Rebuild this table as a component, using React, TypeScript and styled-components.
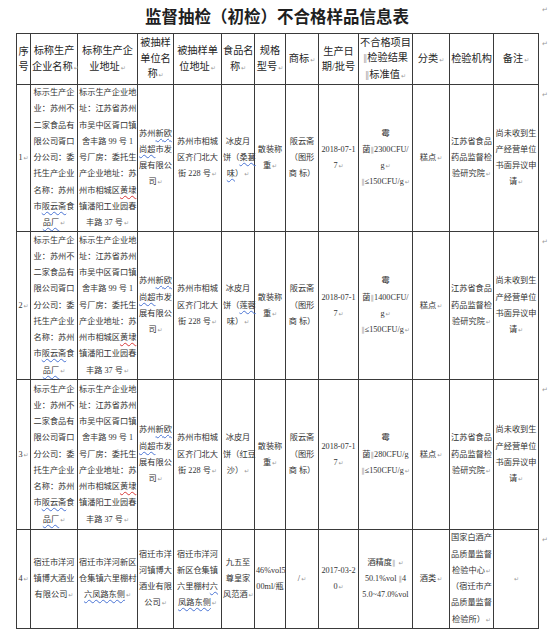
import React from "react";
import styled, { createGlobalStyle } from "styled-components";

const GlobalStyle = createGlobalStyle`
  html, body {
    margin: 0;
    padding: 0;
    background: #fff;
  }
  body {
    font-family: "Liberation Serif", "Noto Sans CJK SC", serif;
    color: #2e2e2e;
  }
`;

// column widths of the inspection table, px
const widths = [14, 47, 60, 36, 48, 33, 31, 33, 40, 54, 37, 44, 45];

// lines use a small markup: {x} blue spell squiggle, [x] red squiggle,
// ‖ grey separator, ↵ paragraph mark
const header: string[][] = [
  ["序", "号"],
  ["标称生产", "企业名称↵"],
  ["标称生产企", "业地址↵"],
  ["被抽样", "单位名", "称↵"],
  ["被抽样单", "位地址↵"],
  ["食品名", "称↵"],
  ["规格", "型号↵"],
  ["商标↵"],
  ["生产日", "期/批号"],
  ["不合格项目", "‖检验结果", "‖标准值↵"],
  ["分类↵"],
  ["检验机构"],
  ["备注↵"],
];

const maker = [
  "标示生产企",
  "业：苏州不",
  "二家食品有",
  "限公司胥口",
  "分公司：委",
  "托生产企业",
  "名称：苏州",
  "市{阪云斋}食",
  "{品厂}↵",
];
const makerAddr = [
  "标示生产企业地",
  "址：江苏省苏州",
  "市吴中区胥口镇",
  "舍丰路 99 号 1",
  "号厂房：委托生",
  "产企业地址：苏",
  "州市相城区[黄埭]",
  "镇潘阳工业园春",
  "丰路 37 号↵",
];
const seller = ["苏州{新欧}", "{尚超}市发", "展有限公", "司↵"];
const sellerAddr = ["苏州市相城", "区齐门北大", "街 228 号↵"];
const lab = ["江苏省食品", "药品监督检", "验研究院↵"];
const note = ["尚未收到生", "产经营单位", "书面异议申", "请↵"];

type Row = { height: number; cells: string[][] };

const mooncake = (no: string, flavour: string[], result: string[]): string[][] => [
  [no],
  maker,
  makerAddr,
  seller,
  sellerAddr,
  flavour,
  ["散装称", "重↵"],
  ["阪云斋", "（图形", "商 标）"],
  ["2018-07-1", "7↵"],
  result,
  ["糕点↵"],
  lab,
  note,
];

const rows: Row[] = [
  {
    height: 146,
    cells: mooncake(
      "1↵",
      ["冰皮月", "饼（{桑葚}", "{味}）↵"],
      ["霉", "菌‖2300CFU/", "g↵", "‖≤150CFU/g↵"]
    ),
  },
  {
    height: 148,
    cells: mooncake(
      "2↵",
      ["冰皮月", "饼（{莲蓉}", "味）↵"],
      ["霉", "菌‖1400CFU/", "g↵", "‖≤150CFU/g↵"]
    ),
  },
  {
    height: 150,
    cells: mooncake(
      "3↵",
      ["冰皮月", "饼（红豆", "沙）↵"],
      ["霉", "菌‖280CFU/g", "‖≤150CFU/g↵"]
    ),
  },
  {
    height: 98,
    cells: [
      ["4↵"],
      ["宿迁市洋河", "镇博大酒业", "有限公司↵"],
      ["宿迁市洋河新区", "仓集镇六里棚村", "{六凤路东侧}↵"],
      ["宿迁市洋", "河镇博大", "酒业有限", "公司↵"],
      ["宿迁市洋河", "新区仓集镇", "六里棚村{六}", "{凤路东侧}↵"],
      ["九五至", "尊皇家", "风范酒↵"],
      ["46%vol5", "00ml/瓶"],
      ["/↵"],
      ["2017-03-2", "0↵"],
      ["酒精度‖ ↵", "50.1%vol ‖4", "5.0~47.0%vol"],
      ["酒类↵"],
      ["国家白酒产", "品质量监督", "检验中心↵", "（宿迁市产", "品质量监督", "检验所）↵"],
      ["↵"],
    ],
  },
];

const Page = styled.div`
  width: 550px;
  height: 639px;
  overflow: hidden;
`;

const TitleBar = styled.div`
  display: flex;
  height: 33px;
  padding-left: 16px;
`;

const Heading = styled.h1`
  width: 522px;
  margin: 0;
  text-align: center;
  font-family: "Noto Sans CJK SC", sans-serif;
  font-size: 16.5px;
  font-weight: 700;
  line-height: 33px;
  color: #1f1f1f;
`;

const TitleMark = styled.span`
  margin: 6px 0 0 4px;
  font-size: 7px;
  color: #9a9a9a;
`;

const Sheet = styled.table`
  margin-left: 16px;
  border-collapse: collapse;
  table-layout: fixed;
  width: 536px;
`;

const Line = styled.tr<{ $h: number }>`
  height: ${(p) => p.$h}px;
`;

const Cell = styled.td<{ $head?: boolean }>`
  border: 1px solid #3a3a3a;
  padding: 0 1px;
  text-align: center;
  vertical-align: middle;
  white-space: nowrap;
  overflow: visible;
  font-size: ${(p) => (p.$head ? 10.2 : 8.2)}px;
  line-height: ${(p) => (p.$head ? 15.5 : 16.25)}px;
  color: ${(p) => (p.$head ? "#262626" : "#333")};
`;

const RowEnd = styled.td`
  border: none;
  padding: 6px 0 0 3px;
  vertical-align: top;
  font-size: 7px;
  line-height: 8px;
  color: #9a9a9a;
`;

const TextLine = styled.div`
  display: block;
`;

const Squiggle = styled.span<{ $tone: "blue" | "red" }>`
  text-decoration-line: underline;
  text-decoration-style: wavy;
  text-decoration-thickness: 1px;
  text-underline-offset: 2px;
  text-decoration-color: ${(p) => (p.$tone === "blue" ? "#4a74d4" : "#d83a3a")};
`;

const Bar = styled.span`
  color: #a8a8a8;
  font-family: "DejaVu Sans", sans-serif;
  font-size: 0.85em;
`;

const Pilcrow = styled.span`
  color: #9a9a9a;
  font-family: "DejaVu Sans", sans-serif;
  font-size: 6px;
  margin-left: 1px;
`;

const renderLine = (line: string) => {
  const out: React.ReactNode[] = [];
  const re = /\{([^}]*)\}|\[([^\]]*)\]|(‖)|(↵)/g;
  let last = 0;
  let k = 0;
  let m: RegExpExecArray | null;
  while ((m = re.exec(line))) {
    if (m.index > last) out.push(line.slice(last, m.index));
    if (m[1] !== undefined) out.push(<Squiggle key={k++} $tone="blue">{m[1]}</Squiggle>);
    else if (m[2] !== undefined) out.push(<Squiggle key={k++} $tone="red">{m[2]}</Squiggle>);
    else if (m[3]) out.push(<Bar key={k++}>‖</Bar>);
    else out.push(<Pilcrow key={k++}>↵</Pilcrow>);
    last = re.lastIndex;
  }
  if (last < line.length) out.push(line.slice(last));
  return out;
};

const CellText = ({ lines }: { lines: string[] }) => (
  <>
    {lines.map((l, i) => (
      <TextLine key={i}>{renderLine(l)}</TextLine>
    ))}
  </>
);

const App = () => {
  return (
    <Page>
      <GlobalStyle />
      <TitleBar>
        <Heading>监督抽检（初检）不合格样品信息表</Heading>
        <TitleMark>↵</TitleMark>
      </TitleBar>
      <Sheet>
        <colgroup>
          {widths.map((w, i) => (
            <col key={i} style={{ width: w }} />
          ))}
          <col style={{ width: 14 }} />
        </colgroup>
        <tbody>
          <Line $h={51}>
            {header.map((c, i) => (
              <Cell key={i} $head>
                <CellText lines={c} />
              </Cell>
            ))}
            <RowEnd>↵</RowEnd>
          </Line>
          {rows.map((r, ri) => (
            <Line key={ri} $h={r.height}>
              {r.cells.map((c, i) => (
                <Cell key={i}>
                  <CellText lines={c} />
                </Cell>
              ))}
              <RowEnd>↵</RowEnd>
            </Line>
          ))}
        </tbody>
      </Sheet>
    </Page>
  );
};

export default App;
